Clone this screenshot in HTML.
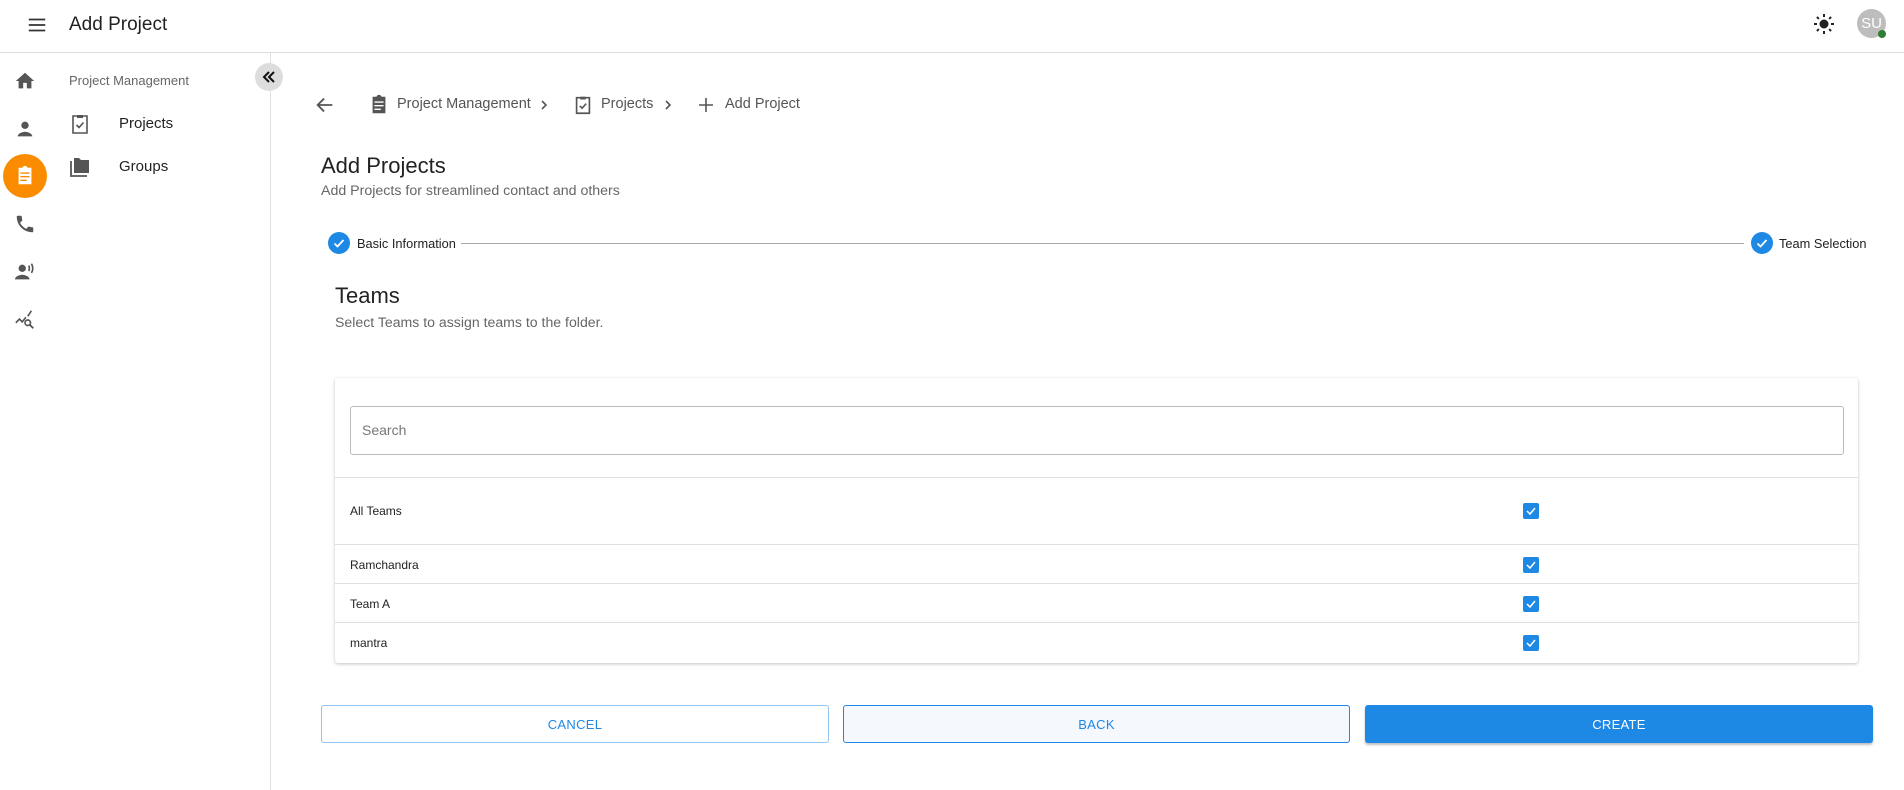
<!DOCTYPE html>
<html><head><meta charset="utf-8">
<style>
*{box-sizing:border-box;margin:0;padding:0}
body{width:1904px;height:790px;background:#fff;font-family:"Liberation Sans",sans-serif;color:#222;position:relative;overflow:hidden}
.a{position:absolute}
svg{display:block}
.hdr{left:0;top:0;width:1904px;height:53px;border-bottom:1px solid #ddd}
.rowline{left:0;width:100%;height:1px;background:#e0e0e0}
.cb{width:16px;height:16px;background:#1e88e5;border-radius:2px}
.btn{top:705px;height:38px;border-radius:3px;font-size:13px;display:flex;align-items:center;justify-content:center;letter-spacing:.3px}
</style></head><body>
<div class="a hdr"></div>
<svg class="a" style="left:26px;top:14px" width="22" height="22" viewBox="0 0 24 24"><path d="M3 6h18M3 12h18M3 18h18" stroke="#333" stroke-width="2"/></svg>
<div class="a" style="left:69px;top:14px;font-size:19px;color:#222">Add Project</div>
<svg class="a" style="left:1812px;top:12px" width="24" height="24" viewBox="0 0 24 24"><circle cx="12" cy="12" r="4.5" fill="#222"/><g stroke="#222" stroke-width="2"><path d="M12 2v3M12 19v3M2 12h3M19 12h3M4.9 4.9l2 2M17.1 17.1l2 2M4.9 19.1l2-2M17.1 6.9l2-2"/></g></svg>
<div class="a" style="left:1857px;top:9px;width:29px;height:29px;border-radius:50%;background:#bdbdbd;color:#fff;font-size:15px;display:flex;align-items:center;justify-content:center">SU</div>
<div class="a" style="left:1878px;top:30px;width:8px;height:8px;border-radius:50%;background:#2e7d32"></div>

<svg class="a" style="left:14px;top:70px" width="22" height="22" viewBox="0 0 24 24"><path d="M10 20v-6h4v6h5v-8h3L12 3 2 12h3v8z" fill="#555"/></svg>
<svg class="a" style="left:14px;top:118px" width="22" height="22" viewBox="0 0 24 24"><circle cx="12" cy="8" r="4" fill="#555"/><path d="M4 20c0-3 5-5 8-5s8 2 8 5z" fill="#555"/></svg>
<div class="a" style="left:3px;top:154px;width:44px;height:44px;border-radius:50%;background:#fb8c00"></div>
<svg class="a" style="left:14px;top:165px" width="22" height="22" viewBox="0 0 24 24"><path d="M19 3h-4.2C14.4 1.8 13.3 1 12 1s-2.4.8-2.8 2H5v18h14zM7 8h10v1.5H7zm0 4h10v1.5H7zm0 4h7v1.5H7z" fill="#fff"/></svg>
<svg class="a" style="left:14px;top:213px" width="22" height="22" viewBox="0 0 24 24"><path d="M20 15.5c-1.2 0-2.4-.2-3.6-.6-.3-.1-.7 0-1 .2l-2.2 2.2c-2.8-1.4-5.1-3.8-6.6-6.6l2.2-2.2c.3-.3.4-.7.2-1-.3-1.1-.5-2.3-.5-3.5 0-.6-.4-1-1-1H4c-.6 0-1 .4-1 1 0 9.4 7.6 17 17 17 .6 0 1-.4 1-1v-3.5c0-.6-.4-1-1-1z" fill="#555"/></svg>
<svg class="a" style="left:13px;top:261px" width="24" height="22" viewBox="0 0 24 24"><circle cx="9" cy="8" r="4" fill="#555"/><path d="M1 20c0-3 5-5 8-5s8 2 8 5z" fill="#555"/><path d="M16 5c1 1.5 1 4.5 0 6M19 3c2 3 2 7 0 10" stroke="#555" stroke-width="1.8" fill="none"/></svg>
<svg class="a" style="left:13px;top:309px" width="24" height="22" viewBox="0 0 24 24"><path d="M2 15l4-4 3 3 4-5M15 8l4-6" stroke="#555" stroke-width="1.8" fill="none"/><circle cx="15" cy="15" r="3" stroke="#555" stroke-width="1.8" fill="none"/><path d="M17 17l4 4" stroke="#555" stroke-width="2"/></svg>

<div class="a" style="left:270px;top:53px;width:1px;height:737px;background:#e0e0e0"></div>
<div class="a" style="left:69px;top:73px;font-size:13px;color:#666">Project Management</div>
<svg class="a" style="left:68px;top:112px" width="24" height="24" viewBox="0 0 24 24"><path d="M5 4h14v17H5z" stroke="#555" stroke-width="1.6" fill="none"/><path d="M9 3h6v3H9z" fill="#555"/><path d="M8.5 13l2.5 2.5 4.5-5" stroke="#555" stroke-width="1.6" fill="none"/></svg>
<div class="a" style="left:119px;top:115px;font-size:15px;color:#222">Projects</div>
<svg class="a" style="left:68px;top:155px" width="24" height="24" viewBox="0 0 24 24"><path d="M3 6v15h16" stroke="#555" stroke-width="1.8" fill="none"/><path d="M6 3h5l2 2h8v13H6z" fill="#555"/></svg>
<div class="a" style="left:119px;top:158px;font-size:15px;color:#222">Groups</div>
<div class="a" style="left:255px;top:63px;width:28px;height:28px;border-radius:50%;background:#ddd"></div>
<svg class="a" style="left:261px;top:69px" width="16" height="16" viewBox="0 0 16 16"><path d="M8 3L3 8l5 5M13 3L8 8l5 5" stroke="#111" stroke-width="2" fill="none"/></svg>

<svg class="a" style="left:314px;top:94px" width="22" height="22" viewBox="0 0 24 24"><path d="M20 12H5M11 5l-7 7 7 7" stroke="#555" stroke-width="2" fill="none"/></svg>
<svg class="a" style="left:368px;top:94px" width="22" height="22" viewBox="0 0 24 24"><path d="M19 3h-4.2C14.4 1.8 13.3 1 12 1s-2.4.8-2.8 2H5v18h14zM7 8h10v1.5H7zm0 4h10v1.5H7zm0 4h7v1.5H7z" fill="#555"/></svg>
<div class="a" style="left:397px;top:96px;font-size:14.5px;color:#555">Project Management</div>
<svg class="a" style="left:537px;top:98px" width="14" height="14" viewBox="0 0 14 14"><path d="M5 3l4 4-4 4" stroke="#555" stroke-width="1.6" fill="none"/></svg>
<svg class="a" style="left:572px;top:94px" width="22" height="22" viewBox="0 0 24 24"><path d="M5 4h14v17H5z" stroke="#555" stroke-width="1.8" fill="none"/><path d="M9 3h6v3H9z" fill="#555"/><path d="M8.5 13l2.5 2.5 4.5-5" stroke="#555" stroke-width="1.8" fill="none"/></svg>
<div class="a" style="left:601px;top:96px;font-size:14.5px;color:#555">Projects</div>
<svg class="a" style="left:661px;top:98px" width="14" height="14" viewBox="0 0 14 14"><path d="M5 3l4 4-4 4" stroke="#555" stroke-width="1.6" fill="none"/></svg>
<svg class="a" style="left:696px;top:95px" width="20" height="20" viewBox="0 0 20 20"><path d="M10 3v14M3 10h14" stroke="#555" stroke-width="1.6"/></svg>
<div class="a" style="left:725px;top:96px;font-size:14.5px;color:#555">Add Project</div>

<div class="a" style="left:321px;top:153px;font-size:22px;color:#222">Add Projects</div>
<div class="a" style="left:321px;top:183px;font-size:14.2px;color:#666">Add Projects for streamlined contact and others</div>

<div class="a" style="left:328px;top:232px;width:22px;height:22px;border-radius:50%;background:#1e88e5"></div>
<svg class="a" style="left:332px;top:236px" width="14" height="14" viewBox="0 0 14 14"><path d="M2.5 7.5l3 3 6-6.5" stroke="#fff" stroke-width="1.8" fill="none"/></svg>
<div class="a" style="left:357px;top:236px;font-size:12.8px;color:#222">Basic Information</div>
<div class="a" style="left:461px;top:243px;width:1283px;height:1px;background:#aaa"></div>
<div class="a" style="left:1751px;top:232px;width:22px;height:22px;border-radius:50%;background:#1e88e5"></div>
<svg class="a" style="left:1755px;top:236px" width="14" height="14" viewBox="0 0 14 14"><path d="M2.5 7.5l3 3 6-6.5" stroke="#fff" stroke-width="1.8" fill="none"/></svg>
<div class="a" style="left:1779px;top:236px;font-size:12.8px;color:#222">Team Selection</div>

<div class="a" style="left:335px;top:283px;font-size:22px;color:#222">Teams</div>
<div class="a" style="left:335px;top:314px;font-size:14.1px;color:#666">Select Teams to assign teams to the folder.</div>

<div class="a" style="left:335px;top:378px;width:1523px;height:285px;box-shadow:0 1px 3px rgba(0,0,0,.25);border-radius:3px;background:#fff">
  <div class="a" style="left:15px;top:28px;width:1494px;height:49px;border:1px solid #bbb;border-radius:3px"></div>
  <div class="a" style="left:27px;top:44px;font-size:14px;color:#777">Search</div>
  <div class="a rowline" style="top:99px"></div>
  <div class="a" style="left:15px;top:126px;font-size:12px">All Teams</div>
  <div class="a cb" style="left:1188px;top:125px"></div>
  <div class="a rowline" style="top:166px"></div>
  <div class="a" style="left:15px;top:180px;font-size:12px">Ramchandra</div>
  <div class="a cb" style="left:1188px;top:179px"></div>
  <div class="a rowline" style="top:205px"></div>
  <div class="a" style="left:15px;top:219px;font-size:12px">Team A</div>
  <div class="a cb" style="left:1188px;top:218px"></div>
  <div class="a rowline" style="top:244px"></div>
  <div class="a" style="left:15px;top:258px;font-size:12px">mantra</div>
  <div class="a cb" style="left:1188px;top:257px"></div>
</div>
<svg class="a" style="left:1523px;top:503px" width="16" height="16" viewBox="0 0 16 16"><path d="M4 8l3 3 5-6" stroke="#fff" stroke-width="1.5" fill="none"/></svg>
<svg class="a" style="left:1523px;top:557px" width="16" height="16" viewBox="0 0 16 16"><path d="M4 8l3 3 5-6" stroke="#fff" stroke-width="1.5" fill="none"/></svg>
<svg class="a" style="left:1523px;top:596px" width="16" height="16" viewBox="0 0 16 16"><path d="M4 8l3 3 5-6" stroke="#fff" stroke-width="1.5" fill="none"/></svg>
<svg class="a" style="left:1523px;top:635px" width="16" height="16" viewBox="0 0 16 16"><path d="M4 8l3 3 5-6" stroke="#fff" stroke-width="1.5" fill="none"/></svg>

<div class="a btn" style="left:321px;width:508px;border:1px solid #90c4f3;color:#1e88e5">CANCEL</div>
<div class="a btn" style="left:843px;width:507px;border:1px solid #1e88e5;background:#f5f9fe;color:#1e88e5">BACK</div>
<div class="a btn" style="left:1365px;width:508px;background:#1e88e5;color:#fff;box-shadow:0 2px 2px rgba(0,0,0,.25)">CREATE</div>
</body></html>
